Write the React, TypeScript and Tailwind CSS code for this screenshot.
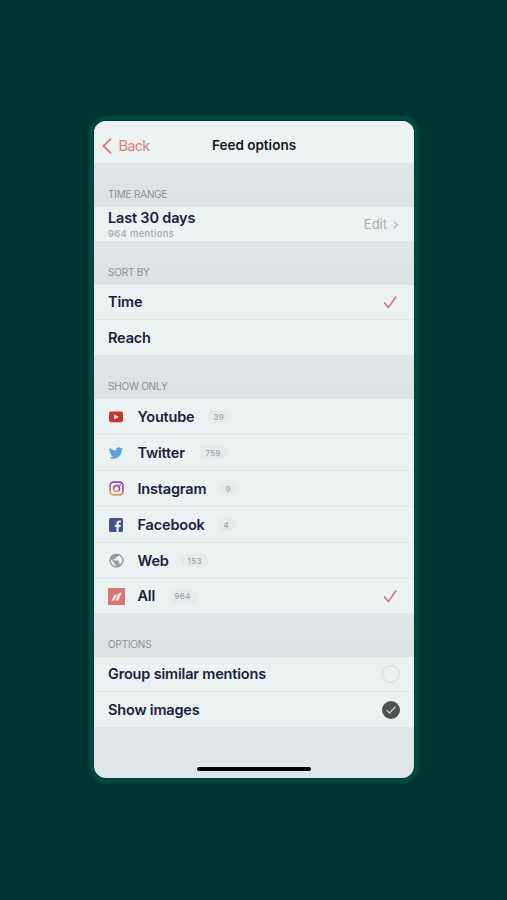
import React from 'react'
import clsx from 'clsx'

type Source = {
  name: string
  count: number
  nameWidth: string
  icon: React.ReactNode
  active?: boolean
}

const YoutubeIcon = () => (
  <svg width="14" height="12" viewBox="0 0 14 12">
    <rect x="0" y="0.5" width="14" height="10.8" rx="2.2" fill="#c5352b" />
    <path d="M5.2 3.2v5.4l4.6-2.7z" fill="#f5e4e2" />
  </svg>
)

const TwitterIcon = () => (
  <svg width="14" height="14" viewBox="0 0 24 24" fill="#5a9fdc">
    <path d="M23.95 4.57a10 10 0 0 1-2.82.77 4.96 4.96 0 0 0 2.16-2.72c-.95.55-2 .96-3.13 1.18a4.92 4.92 0 0 0-8.38 4.48C7.69 8.1 4.07 6.13 1.64 3.16a4.93 4.93 0 0 0 1.52 6.57 4.9 4.9 0 0 1-2.23-.61v.06a4.92 4.92 0 0 0 3.95 4.83 5 5 0 0 1-2.21.08 4.94 4.94 0 0 0 4.6 3.42A9.87 9.87 0 0 1 0 19.54a14 14 0 0 0 7.55 2.21c9.05 0 14-7.5 14-13.98 0-.21 0-.42-.02-.63a9.94 9.94 0 0 0 2.42-2.57z" />
  </svg>
)

const InstagramIcon = () => (
  <svg width="15" height="15" viewBox="0 0 15 15" fill="none">
    <defs>
      <linearGradient id="insta" x1="0.65" y1="0" x2="0.35" y2="1">
        <stop offset="0" stopColor="#7a4fc4" />
        <stop offset="0.5" stopColor="#b8467f" />
        <stop offset="1" stopColor="#e2a45c" />
      </linearGradient>
    </defs>
    <g stroke="url(#insta)" strokeWidth="1.6">
      <rect x="1.1" y="1.1" width="12.8" height="12.8" rx="3.4" />
      <circle cx="7.5" cy="7.5" r="3" />
    </g>
    <circle cx="11.1" cy="3.9" r="0.9" fill="#9a4aa8" />
  </svg>
)

const FacebookIcon = () => (
  <svg width="14" height="14" viewBox="0 0 14 14">
    <rect width="14" height="14" rx="1.6" fill="#44508f" />
    <path d="M7.5 14V8.9H5.8V6.8h1.7V5.3c0-1.9 1.1-2.8 2.8-2.8.8 0 1.4.1 1.6.1v1.9h-1.1c-.9 0-1.1.5-1.1 1.1v1.2h2.1l-.3 2.1H9.7V14z" fill="#edf1f5" />
  </svg>
)

const WebIcon = () => (
  <svg width="17" height="17" viewBox="0 0 24 24" fill="#9699a3">
    <path d="M12 2C6.48 2 2 6.48 2 12s4.48 10 10 10 10-4.48 10-10S17.52 2 12 2zm-1 17.93c-3.95-.49-7-3.85-7-7.93 0-.62.08-1.21.21-1.79L9 15v1c0 1.1.9 2 2 2v1.93zm6.9-2.54c-.26-.81-1-1.39-1.9-1.39h-1v-3c0-.55-.45-1-1-1H8v-2h2c.55 0 1-.45 1-1V7h2c1.1 0 2-.9 2-2v-.41c2.93 1.19 5 4.06 5 7.41 0 2.08-.8 3.97-2.1 5.39z" />
  </svg>
)

const AllIcon = () => (
  <svg width="17" height="17" viewBox="0 0 17 17">
    <rect width="17" height="17" fill="#d87672" />
    <g fill="#fbeeee">
      <path d="M3.4 12.6 5.6 8.4C6.3 7.2 7.400 6.500 9 6.300L6.900 11.300C6.500 12.200 5.900 12.600 5 12.600z" />
      <path d="M7.3 12.6 9.900 6.400C10.500 5.100 11.800 4.500 13.700 4.400L11 11C10.500 12.200 9.800 12.600 8.600 12.600z" />
    </g>
  </svg>
)

const CheckIcon = () => (
  <svg width="14" height="14" viewBox="0 0 14 14" fill="none" stroke="#d6737a" strokeWidth="1.6" strokeLinecap="round" strokeLinejoin="round">
    <path d="M1.6 7.9 5.3 12.6 12.9 2" />
  </svg>
)

const sources: Source[] = [
  { name: 'Youtube', count: 39, nameWidth: 'w-[57px]', icon: <YoutubeIcon /> },
  { name: 'Twitter', count: 759, nameWidth: 'w-[49px]', icon: <TwitterIcon /> },
  { name: 'Instagram', count: 9, nameWidth: 'w-[69px]', icon: <InstagramIcon /> },
  { name: 'Facebook', count: 4, nameWidth: 'w-[67px]', icon: <FacebookIcon /> },
  { name: 'Web', count: 153, nameWidth: 'w-[31px]', icon: <WebIcon /> },
  { name: 'All', count: 964, nameWidth: 'w-[18px]', icon: <AllIcon />, active: true },
]

function SectionTitle({ children }: { children: React.ReactNode }) {
  return (
    <div className="flex h-11 items-end bg-gradient-to-b from-[#e0e5e7] to-[#dce1e4] pb-[5px] pl-3.5">
      <h2 className="text-[10px] leading-4 tracking-[-0.2px] text-[#8b9093]">{children}</h2>
    </div>
  )
}

function Row({ children, className }: { children: React.ReactNode; className?: string }) {
  return (
    <div className={clsx('flex items-center bg-[#ecf1f1] pr-[17px] pl-3.5 text-[14.5px] font-semibold tracking-[-0.18px] text-[#1d1d40]', className)}>
      {children}
    </div>
  )
}

export default function App() {
  return (
    <div className="flex h-[900px] w-[507px] items-start justify-center bg-[#003532] pt-[121px] pl-px font-['Inter',sans-serif]">
      <div className="flex h-[657px] w-80 flex-col overflow-hidden rounded-[12px] bg-[#e0e5e7] shadow-[0_0_0_1px_#003b38,0_0_2px_5px_#004a43]">
        {/* Nav bar */}
        <header className="grid h-[42px] shrink-0 grid-cols-[1fr_auto_1fr] items-center bg-[#edf2f2] pt-[7px]">
          <button className="flex items-center gap-[6.5px] pl-2 text-[14.5px] tracking-[-0.7px] text-[#e0807b]">
            <svg width="10" height="16" viewBox="0 0 10 16" fill="none" stroke="#dd7771" strokeWidth="1.8" strokeLinecap="round" strokeLinejoin="round">
              <path d="M8.5 1.2 1.5 8l7 6.8" />
            </svg>
            Back
          </button>
          <h1 className="text-[13.5px] font-semibold text-[#15171c]">Feed options</h1>
        </header>

        <SectionTitle>TIME RANGE</SectionTitle>
        <Row className="h-[34px] justify-between">
          <div className="pt-[2px]">
            <div className="text-[14.5px] leading-[17px]">Last 30 days</div>
            <div className="text-[9.5px] leading-[15px] font-medium tracking-[0.3px] text-[#a5a9ad]">964 mentions</div>
          </div>
          <div className="-mr-px flex items-center gap-[6px] pt-px text-[13px] font-normal tracking-normal text-[#a6abae]">
            Edit
            <svg width="5" height="8" viewBox="0 0 5 8" fill="none" stroke="#a6abae" strokeWidth="1.2">
              <path d="M0.8 0.6 4.2 4 0.8 7.4" />
            </svg>
          </div>
        </Row>

        <SectionTitle>SORT BY</SectionTitle>
        <Row className="h-[35px] justify-between border-b border-[#e2e7e8]">
          Time
          <CheckIcon />
        </Row>
        <Row className="h-[35px]">Reach</Row>

        <SectionTitle>SHOW ONLY</SectionTitle>
        {sources.map((source) => (
          <Row key={source.name} className={source.active ? 'h-[34px]' : 'h-9 border-b border-[#e0e5e6]'}>
            <span className="mr-[9.5px] -ml-1 flex w-6 justify-center">{source.icon}</span>
            <span className={clsx('whitespace-nowrap', source.nameWidth)}>{source.name}</span>
            <span className="ml-[12px] flex h-[13px] min-w-[18px] items-center justify-center rounded-full bg-[#e6ebeb] px-[7px] text-[8px] font-normal tracking-[0.4px] text-[#94999c]">
              {source.count}
            </span>
            {source.active && (
              <span className="ml-auto">
                <CheckIcon />
              </span>
            )}
          </Row>
        ))}

        <SectionTitle>OPTIONS</SectionTitle>
        <Row className="h-[35px] justify-between border-b border-[#e0e5e6]">
          Group similar mentions
          <span className="-mr-[3px] size-[18px] rounded-full border border-[#d5dadb]" />
        </Row>
        <Row className="h-[35px] justify-between">
          Show images
          <span className="-mr-[3px] flex size-[18px] items-center justify-center rounded-full bg-[#4e5352]">
            <svg width="10" height="8" viewBox="0 0 10 8" fill="none" stroke="#d5dada" strokeWidth="1.1" strokeLinecap="round" strokeLinejoin="round">
              <path d="M0.8 4.3 3.5 7 9.2 1" />
            </svg>
          </span>
        </Row>

        {/* Home indicator */}
        <div className="flex flex-1 items-end justify-center pb-[7px]">
          <div className="h-1 w-[114px] rounded-full bg-black" />
        </div>
      </div>
    </div>
  )
}
